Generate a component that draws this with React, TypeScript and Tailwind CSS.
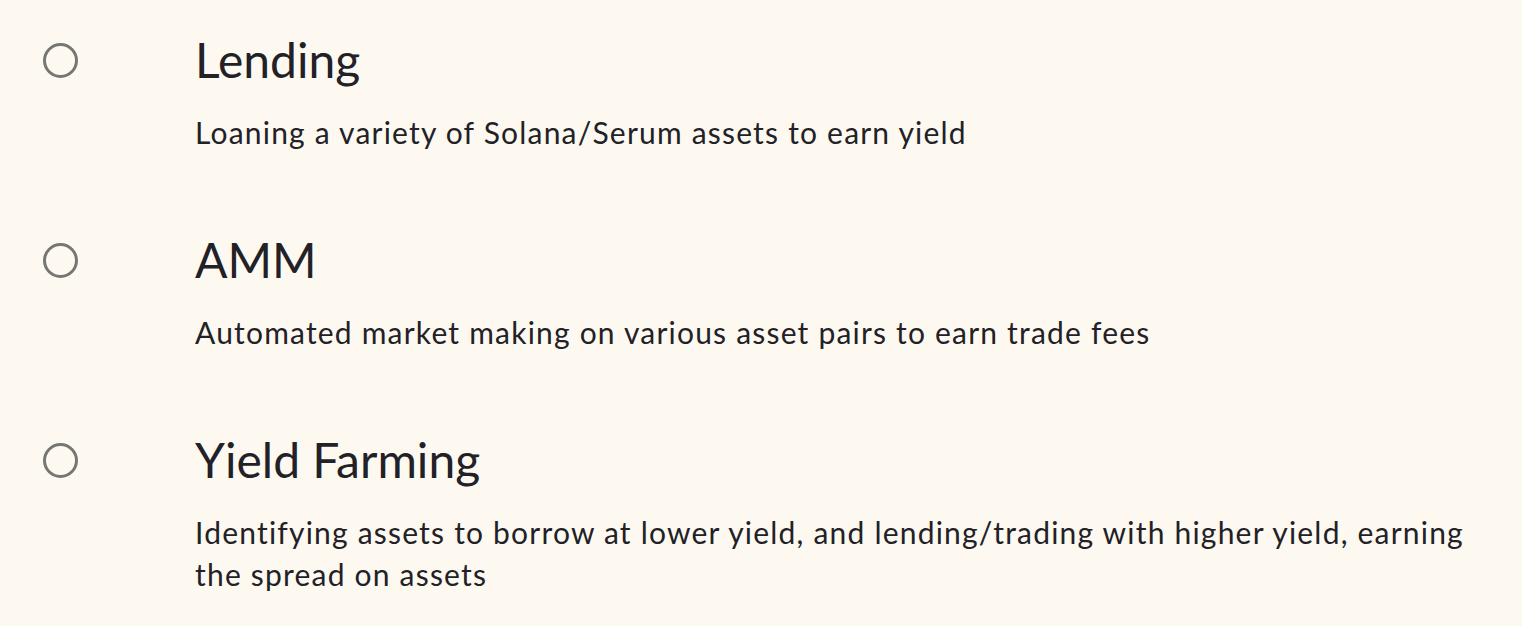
import React from "react";

type Item = { title: string; body: string };

const items: Item[] = [
  { title: "Lending", body: "Loaning a variety of Solana/Serum assets to earn yield" },
  { title: "AMM", body: "Automated market making on various asset pairs to earn trade fees" },
  {
    title: "Yield Farming",
    body: "Identifying assets to borrow at lower yield, and lending/trading with higher yield, earning the spread on assets",
  },
];

function Radio() {
  return <span className="block w-[35px] h-[35px] rounded-full border-[3px] border-[#777676] shrink-0" />;
}

export default function App() {
  return (
    <div
      className="min-h-screen w-full bg-[#fdf9f0] text-[#222127] pt-[25px]"
      style={{ fontFamily: "Lato, 'Noto Sans', sans-serif" }}
    >
      <ul className="flex flex-col gap-[72px]">
        {items.map((it) => (
          <li key={it.title} className="flex">
            <div className="w-[195px] pl-[43px] pt-[18px] shrink-0">
              <Radio />
            </div>
            <div className="w-[1300px]">
              <h3 className="text-[48px] leading-[70px] font-normal">{it.title}</h3>
              <p className="mt-[16px] text-[30px] leading-[42px] tracking-[1.2px]">{it.body}</p>
            </div>
          </li>
        ))}
      </ul>
    </div>
  );
}
